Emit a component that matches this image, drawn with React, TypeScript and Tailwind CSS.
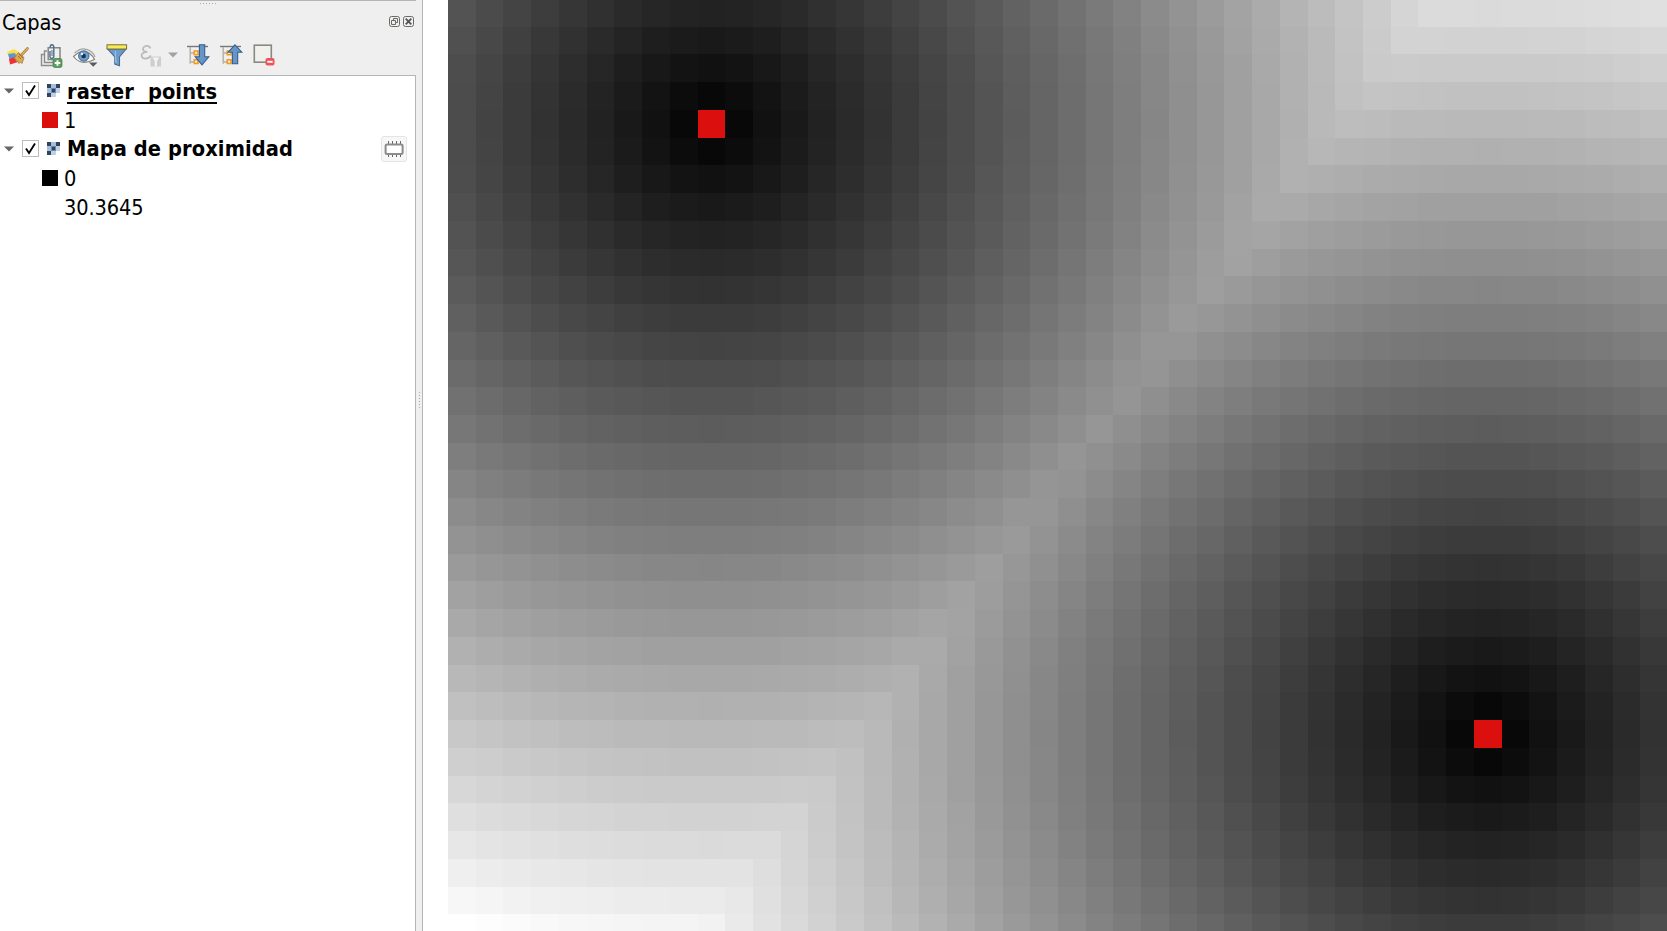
import React from "react";

const COLS = 44;
const ROWS = 34;
const MAX_DISTANCE = 30.3645;
const POINTS = [
  [9, 4],
  [37, 26],
];

const tracks = (count: number, origin: number, step: number, first: number) => {
  const sizes: string[] = [];
  let edge = first;
  for (let i = 1; i <= count; i++) {
    const next = Math.floor(origin + i * step);
    sizes.push(`${next - edge}px`);
    edge = next;
  }
  return sizes.join(" ");
};

const columnTracks = tracks(COLS, 0.44, 27.73, 0);
const rowTracks = tracks(ROWS, -0.5, 27.735, 0);

const cells = Array.from({ length: COLS * ROWS }, (_, i) => {
  const x = i % COLS;
  const y = Math.floor(i / COLS);
  const d = Math.min(...POINTS.map(([px, py]) => Math.hypot(x - px, y - py)));
  if (d === 0) return "#dc0f0f";
  const v = Math.min(255, Math.round((d / MAX_DISTANCE) * 255));
  return `rgb(${v},${v},${v})`;
});

function RasterMap() {
  return (
    <div className="grid h-full flex-1 content-start overflow-hidden" style={{ gridTemplateColumns: columnTracks, gridTemplateRows: rowTracks }}>
      {cells.map((color, i) => (
        <div key={i} style={{ backgroundColor: color }} />
      ))}
    </div>
  );
}

const BrushIcon = () => (
  <svg className="ml-[6px]" width="24" height="24" viewBox="0 0 24 24">
    <path d="M1 8 L8 5 L14 9 L10 13 L3 13Z" fill="#f7e04b" />
    <path d="M2 10 L9 9 L11 14 L4 17Z" fill="#5f95d0" />
    <path d="M3 15 L9 13 L12 18 L4 20.5Z" fill="#ee3038" />
    <path d="M21.5 4.5 L15 11.5" stroke="#a97932" strokeWidth="2.6" strokeLinecap="round" />
    <path d="M21.5 4.5 L15 11.5" stroke="#dfaf62" strokeWidth="1.3" strokeLinecap="round" />
    <path d="M12.5 8.5 L18 13.5 L16 19.5 L14.5 18 L13 19.5 L11.5 17 L10 17.6 L10 15.5 L8 14.5Z" fill="#dca951" stroke="#a87a36" strokeWidth=".8" />
    <path d="M13 10 L17 14 M12 12 L15 15" stroke="#96723f" strokeWidth="1" />
  </svg>
);

const AddGroupIcon = () => (
  <svg className="ml-[9px]" width="25" height="25" viewBox="0 0 25 25" fill="none">
    <path d="M5 10.5H2.5V21.5H15M8 7H5.5V18.5H16" stroke="#8c8c89" strokeWidth="1.4" />
    <path d="M9.2 3.7H21V15.5H9.2Z" stroke="#858582" strokeWidth="1.5" />
    <path d="M11 7V13Q12.5 16 14.8 13V3.5Q14.8 .8 12.8 .8Q11.2 .8 11.2 3.5" stroke="#4b6e8d" strokeWidth="1.4" />
    <path d="M13 6V12" stroke="#4b6e8d" strokeWidth="1" />
    <rect x="14" y="14.5" width="9" height="9" rx="1.8" fill="#5b9c60" stroke="#438348" strokeWidth=".7" />
    <path d="M18.5 16.2V21.8M15.7 19H21.3" stroke="#fff" strokeWidth="1.9" />
  </svg>
);

const EyeIcon = () => (
  <svg className="ml-[8px]" width="26" height="25" viewBox="0 0 26 25" fill="none">
    <path d="M1.5 12.5Q10 4.5 17 9Q21 12 22.5 15.5Q9 22.5 1.5 12.5Z" fill="#f8f8f6" stroke="#85857f" strokeWidth="1.2" />
    <path d="M2.5 9Q11 1.5 19 7.5Q22 10 23 13" stroke="#a4a49d" strokeWidth="1.2" />
    <circle cx="11.8" cy="12" r="5.2" fill="#719bca" stroke="#456c98" strokeWidth="1" />
    <circle cx="11.6" cy="12" r="2.3" fill="#153454" />
    <circle cx="10" cy="10" r="1.2" fill="#e2eefa" />
    <path d="M17 18.5H25.5L21.2 22.8Z" fill="#5c5c5c" />
  </svg>
);

const FilterIcon = () => (
  <svg className="ml-[8px]" width="22" height="25" viewBox="0 0 22 25">
    <path d="M1.7 5H20L13.5 13V21.8L8.8 20V13Z" fill="#6b9bce" stroke="#476b91" strokeWidth="1.1" />
    <path d="M9.5 7V13L10 19" fill="none" stroke="#9bbde0" strokeWidth="1.3" />
    <rect x="1" y=".8" width="19.6" height="4.2" fill="#fbea52" stroke="#77713a" strokeWidth="1" />
  </svg>
);

const ExpressionIcon = () => (
  <svg className="ml-[12px]" width="23" height="25" viewBox="0 0 23 25" fill="none">
    <path d="M10.5 4.3Q9 1 5.5 2Q2 3.5 3.5 6.5Q4.7 7.8 7.3 7.8Q2.5 8 1.5 11Q1.5 14.5 5.5 14.6Q9 14.6 10.8 11.5" stroke="#bababa" strokeWidth="1.7" />
    <path d="M10.5 12.5H21V22.5H10.5Z" fill="#cecece" />
    <path d="M12.5 13.5H19.2L17 17.5V22.5H14.8V17.5Z" fill="#f3f3f3" />
  </svg>
);

const TreeIcon = ({ up = false }: { up?: boolean }) => (
  <svg className={up ? "ml-[9px]" : "ml-[8px]"} width="24" height="25" viewBox="0 0 24 25" fill="none">
    <path d="M0 2.5H21" stroke="#777" strokeWidth="1.4" />
    <path d="M3.2 3V19.7M4 9H7M4 18H7" stroke="#afafaa" strokeWidth="1.4" />
    <rect x="7.3" y="7" width="3.7" height="3.7" fill="#fff2cd" stroke="#f39a26" strokeWidth="1.6" />
    <rect x="7.3" y="15.8" width="3.7" height="3.7" fill="#fff2cd" stroke="#f39a26" strokeWidth="1.6" />
    {up ? (
      <path d="M15 .8L21.8 8.2H17.7V19.7H12.4V8.2H8.2Z" fill="#6795c8" stroke="#355f8c" strokeWidth="1.1" />
    ) : (
      <path d="M12.4 .8H17.7V12.8H21.8L15 20.8L8.2 12.8H12.4Z" fill="#6795c8" stroke="#355f8c" strokeWidth="1.1" />
    )}
  </svg>
);

const RemoveIcon = () => (
  <svg className="ml-[9px]" width="23" height="25" viewBox="0 0 23 25" fill="none">
    <rect x="1.3" y="1.2" width="17" height="17" fill="#f0f0ed" stroke="#888985" strokeWidth="1.6" />
    <rect x="12.5" y="14" width="9" height="7.5" rx="2" fill="#f15458" />
    <path d="M14.3 17.8H19.7" stroke="#fff" strokeWidth="1.9" />
  </svg>
);

const RasterIcon = () => (
  <svg width="13" height="13" viewBox="0 0 13 13" shapeRendering="crispEdges">
    <path d="M0 0H13V9H9V13H0Z" fill="#a9c5e2" />
    <path d="M0 0H4V4H0ZM9 0H13V4H9ZM5 5H8V8H5ZM0 9H4V13H0Z" fill="#34435b" />
    <path d="M4 4H9V5H4ZM4 8H9V9H4ZM4 5H5V8H4ZM8 5H9V8H8Z" fill="#7088a8" />
    <path d="M4 0H9V4H4ZM0 4H4V9H0Z" fill="#a3bfdf" />
    <path d="M4 9H9V13H4ZM9 4H13V9H9Z" fill="#bdd2e9" />
  </svg>
);

const MemoryIcon = () => (
  <div className="mr-[8px] flex h-[26px] w-[26px] items-center justify-center rounded-[3px] border border-[#e4e4e4] bg-[#f7f7f7]">
    <svg width="20" height="18" viewBox="0 0 20 18" fill="none">
      <path d="M4.5 1V4M8.5 1V4M12.5 1V4M16.5 1V4M4.5 14V17M8.5 14V17M12.5 14V17M16.5 14V17" stroke="#686868" strokeWidth="1" />
      <rect x="1.6" y="4.5" width="17" height="9.5" rx="1.5" fill="#fff" stroke="#8b8b8b" strokeWidth="2" />
    </svg>
  </div>
);

function LayerRow({ name, active, memory }: { name: React.ReactNode; active?: boolean; memory?: boolean }) {
  return (
    <div className="flex h-[29px] items-center">
      <svg className="ml-[4px]" width="10" height="6" viewBox="0 0 10 6">
        <path d="M0 .5H10L5 5.5Z" fill="#666" />
      </svg>
      <div className="ml-[8px] flex h-[17px] w-[17px] items-center justify-center border border-[#bdbdbd] bg-white">
        <svg width="13" height="13" viewBox="0 0 13 13" fill="none">
          <path d="M2 6.5L5 11L11 1.5" stroke="#000" strokeWidth="1.8" />
        </svg>
      </div>
      <div className="ml-[8px]"><RasterIcon /></div>
      <span className="ml-[7px] flex-1 whitespace-pre pt-px text-[21.6px] font-bold tracking-[0.12px]">
        <span className={active ? "inline-block h-[25px] border-b-2 border-black leading-[26px]" : ""}>{name}</span>
      </span>
      {memory && <MemoryIcon />}
    </div>
  );
}

function LegendRow({ label, swatch }: { label: string; swatch: string }) {
  return (
    <div className="flex h-[29px] items-center">
      <div className={`ml-[42px] h-4 w-4 ${swatch}`} />
      <span className="ml-[6px] pt-[2px] text-[21.6px] tracking-[-0.1px]">{label}</span>
    </div>
  );
}

function LayersPanel() {
  return (
    <aside className="flex h-full w-[416px] shrink-0 flex-col border-t border-[#b5b5b5] bg-[#efefef]">
      <div className="flex h-[4px] items-center pl-[200px]">
        <div className="flex gap-[2px]">
          {[0, 1, 2, 3, 4, 5].map((n) => <i key={n} className="h-px w-px bg-[#aaa]" />)}
        </div>
      </div>
      <header className="flex h-[35px] items-center pl-[2px]">
        <span className="flex-1 text-[21.6px] tracking-[-0.1px]">Capas</span>
        <svg width="11" height="11" viewBox="0 0 11 11" fill="none" className="mr-[3px] mb-[3px]">
          <rect x=".5" y=".5" width="10" height="10" rx="2" stroke="#696965" />
          <path d="M4.5 4V2.5H8.5V6.5H7M2.5 4.5H6.5V8.5H2.5Z" stroke="#696965" />
        </svg>
        <svg width="11" height="11" viewBox="0 0 11 11" fill="none" className="mr-[2px] mb-[3px]">
          <rect x=".5" y=".5" width="10" height="10" rx="2" stroke="#696965" />
          <path d="M2.7 2.7L8.3 8.3M8.3 2.7L2.7 8.3" stroke="#555" strokeWidth="1.8" />
        </svg>
      </header>
      <div className="flex h-[35px] items-start pt-[4px]">
        <BrushIcon />
        <AddGroupIcon />
        <EyeIcon />
        <FilterIcon />
        <ExpressionIcon />
        <svg width="10" height="6" viewBox="0 0 10 6" className="ml-[5px] mr-px mt-[8px]">
          <path d="M0 .5H10L5 5.5Z" fill="#a2a2a2" />
        </svg>
        <TreeIcon />
        <TreeIcon up />
        <RemoveIcon />
      </div>
      <div className="flex-1 border-t border-r border-[#b5b5b5] bg-white">
        <LayerRow name={<>raster<span className="px-[2px]">_</span>points</>} active />
        <LegendRow label="1" swatch="bg-[#dc0f0f]" />
        <LayerRow name="Mapa de proximidad" memory />
        <LegendRow label="0" swatch="bg-black" />
        <LegendRow label="30.3645" swatch="bg-transparent" />
      </div>
    </aside>
  );
}

export default function App() {
  return (
    <main className="flex h-[931px] w-[1667px] overflow-hidden bg-white font-['DejaVu_Sans_Condensed','DejaVu_Sans',sans-serif] leading-none text-black [font-stretch:condensed]">
      <LayersPanel />
      <div className="flex h-full w-[7px] shrink-0 flex-col items-center gap-[2px] border-r border-[#b5b5b5] bg-[#efefef] pt-[392px]">
        {[0, 1, 2, 3, 4, 5].map((n) => <i key={n} className="h-px w-px shrink-0 bg-[#aaa]" />)}
      </div>
      <div className="w-[25px] shrink-0" />
      <RasterMap />
    </main>
  );
}
